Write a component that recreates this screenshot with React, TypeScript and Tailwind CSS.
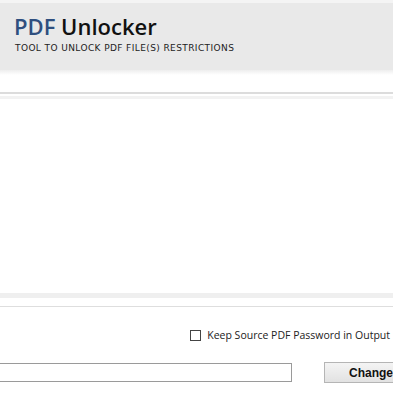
import React from 'react';

export default function App() {
  return (
    <div className="w-[393px] h-[393px] overflow-hidden bg-white relative" style={{ fontFamily: '"DejaVu Sans", sans-serif' }}>
      {/* Header */}
      <div className="h-[3px] bg-[#f4f4f4]" />
      <div className="h-[67px] bg-[#e9e9e9] pl-[14px] pt-[10px]">
        <div className="text-[22px] font-semibold leading-[27px]" style={{ fontFamily: '"Open Sans", sans-serif' }}>
          <span className="text-[#2f4f7f]">PDF</span> <span className="text-[#111]">Unlocker</span>
        </div>
        <div className="mt-[2px] ml-[1px] text-[9px] text-[#222] tracking-[0.4px] leading-[12px]">
          TOOL TO UNLOCK PDF FILE(S) RESTRICTIONS
        </div>
      </div>
      <div className="h-[5px] bg-gradient-to-b from-[#eeeeee] to-white" />
      <div className="h-[17px]" />
      <div className="h-[2px] bg-[#dcdcdc]" />
      <div className="h-[2px]" />
      <div className="h-[3px] bg-[#f2f2f2]" />

      {/* Content area */}
      <div className="h-[194px]" />

      <div className="h-[5px] bg-[#efefef]" />
      <div className="h-[8px]" />
      <div className="h-[1px] bg-[#dedede]" />

      {/* Options */}
      <div className="h-[55px] flex items-start justify-end pt-[21px] pr-[3px]">
        <label className="flex items-center gap-[6px] text-[10.5px] text-[#222]" style={{ fontFamily: '"Open Sans", sans-serif' }}>
          <span className="w-[11px] h-[11px] border border-[#444] bg-white" />
          Keep Source PDF Password in Output
        </label>
      </div>

      <div className="flex items-center">
        <div className="shrink-0 w-[292px] h-[19px] border border-[#9a9a9a] border-l-0 bg-white" />
        <button className="ml-[32px] shrink-0 w-[80px] h-[21px] border border-[#b5b5b5] bg-gradient-to-b from-[#f4f4f4] to-[#e2e2e2] text-[12px] font-bold text-[#111] text-left pl-[24px]" style={{ fontFamily: '"Liberation Sans", Arial, sans-serif' }}>
          Change
        </button>
      </div>
    </div>
  );
}
